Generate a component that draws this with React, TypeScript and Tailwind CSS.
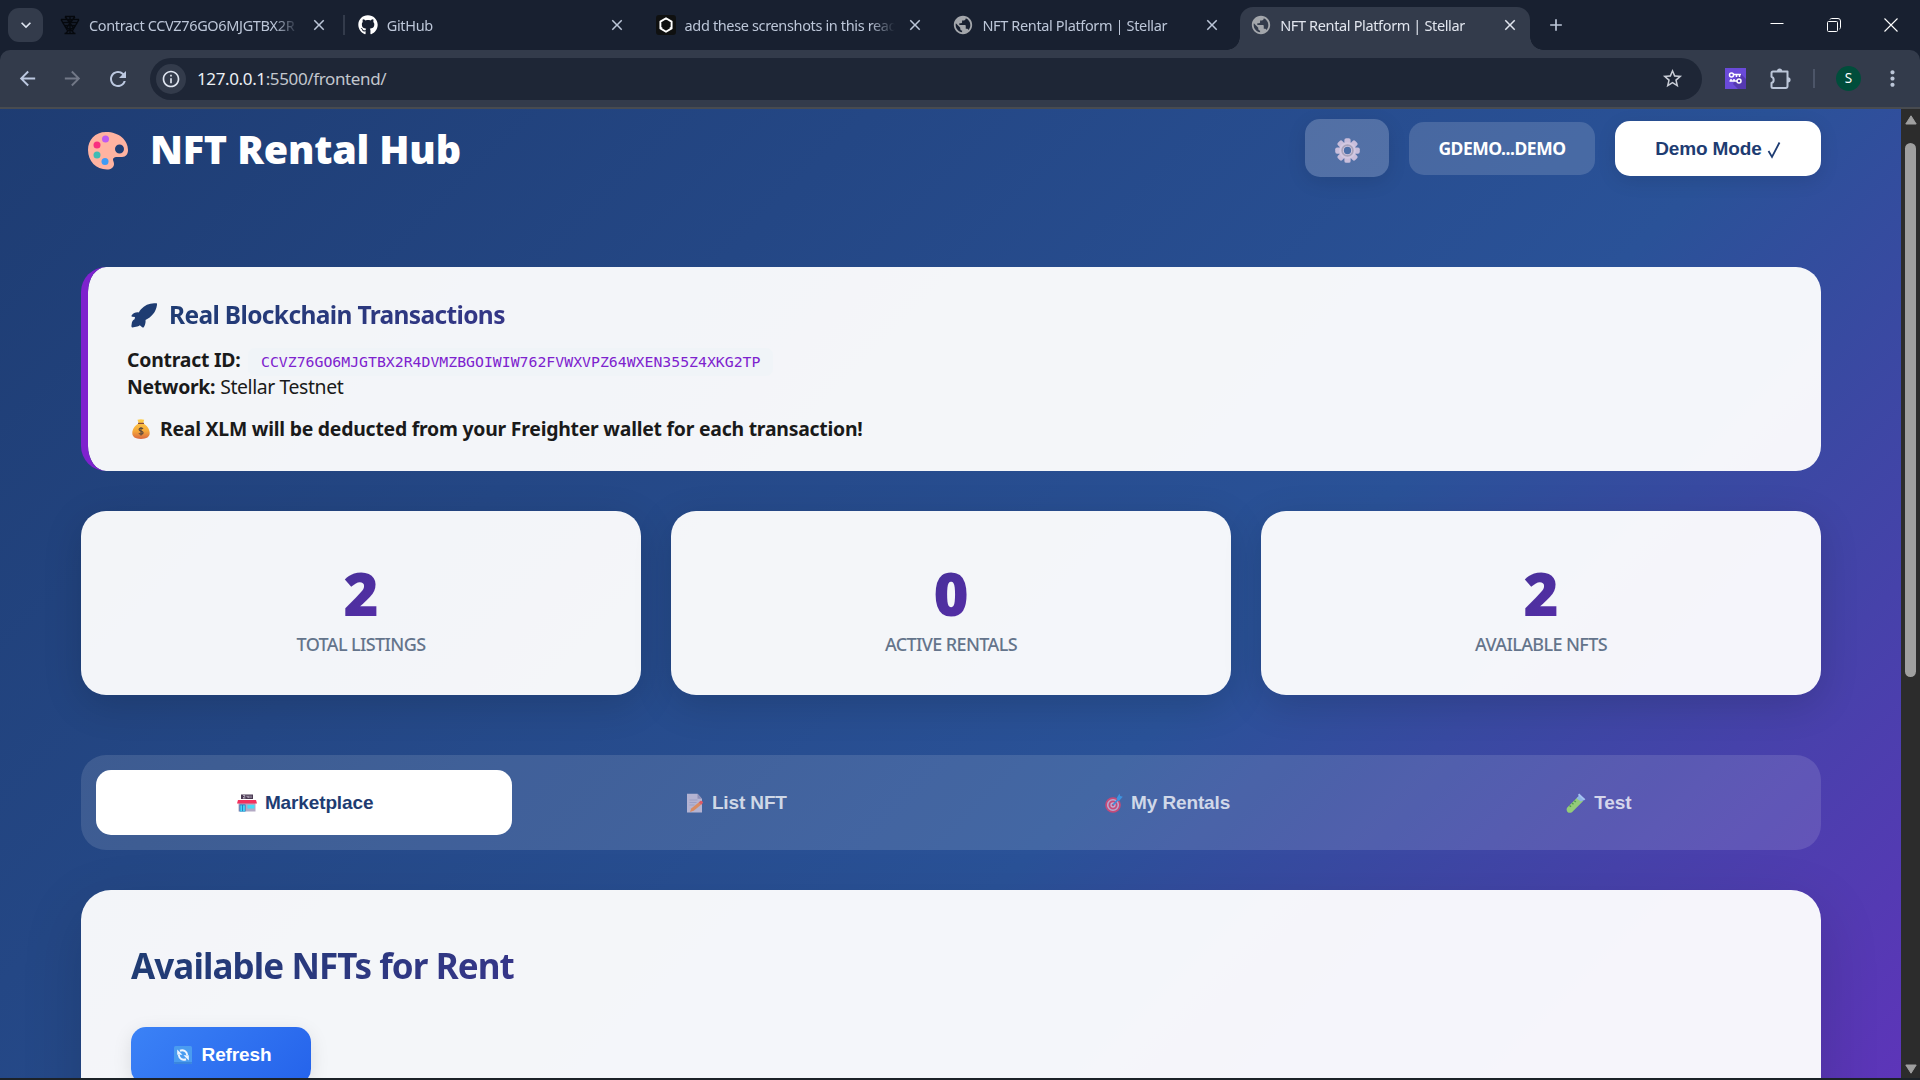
import type { ReactNode } from 'react';
import { MdArrowBack, MdArrowForward, MdClose, MdAdd, MdKeyboardArrowDown, MdRefresh, MdStarBorder, MdPublic, MdMoreVert, MdOutlineInfo } from 'react-icons/md';
import { FaGithub } from 'react-icons/fa';

const PaletteIcon = () => (
  <svg viewBox="0 0 40 38" className="h-[38px] w-[40px] shrink-0">
    <path fillRule="evenodd" fill="#ffb3a1" d="M18 0C7 0 0 8 0 18c0 11 8 19.500 19 19.500 4 0 7-2 7-5.500 0-2-1-3-1-4.500 0-2 2-2.500 5-2.500h4c4 0 6-3 6-7C40 8 31 0 18 0Zm13.500 12.500a4.500 4.500 0 1 1 0 9 4.500 4.500 0 0 1 0-9Z" />
    <circle cx="17.500" cy="7" r="3.500" fill="#bf5af2" />
    <circle cx="9" cy="13" r="3.500" fill="#f92f80" />
    <circle cx="9" cy="23" r="3.500" fill="#3fbcb4" />
    <circle cx="17" cy="29.500" r="3.500" fill="#3f9bf5" />
  </svg>
);

const GearIcon = () => (
  <svg viewBox="0 0 24 24" className="h-[25px] w-[25px]">
    <g fill="#c9bedb">
      {[0, 45, 90, 135].map((a) => (
        <rect key={a} x="9" y="0.200" width="6" height="23.600" rx="1.800" transform={`rotate(${a} 12 12)`} />
      ))}
    </g>
    <circle cx="12" cy="12" r="8" fill="#d3c8e1" />
    <circle cx="12" cy="12" r="5.200" fill="none" stroke="#a9a3bb" strokeWidth="1.600" />
    <circle cx="12" cy="12" r="3.500" fill="#4d6fa8" />
  </svg>
);

const RocketIcon = () => (
  <svg viewBox="0 0 26 25" className="h-[25px] w-[26px] shrink-0" fill="#1e3c72">
    <path d="M25.600.300c-6-.800-11.600 1.300-15.600 6-.900 1-1.600 2-2.200 3.100-2.900-.400-5.600.700-7.200 3.100-.400.700 0 1.200.700 1.200l2.700.300-.400 2.200c-1.300.600-2.300 1.700-2.700 3.300L.500 22.300c-.200 1 0 2 .8 2.200l5-.9c1.200-.2 2-.7 2.500-1.300l2.400 1.900c.7.500 1.200.6 1.700-.1 1.300-2 1.900-4.500 1.600-7 6-3 10.500-8 11.400-14.500.100-1.200.300-2.200-.3-2.300Z" />
  </svg>
);

const MoneyBagIcon = () => (
  <svg viewBox="0 0 18 20" className="h-[20px] w-[18px] shrink-0">
    <defs>
      <linearGradient id="bag" x1="0" y1="0" x2="0" y2="1">
        <stop offset="0" stopColor="#ffcf4b" />
        <stop offset="0.600" stopColor="#f5a839" />
        <stop offset="1" stopColor="#d9683f" />
      </linearGradient>
    </defs>
    <path fill="url(#bag)" d="M5.500.800 9 .200l3.200.600-1 3.400C15 6.500 17.700 10 17.700 14c0 4-3 5.900-8.700 5.900S.300 18 .300 14C.300 10 3 6.500 6.700 4.200Z" />
    <path d="M6 4.400h6" stroke="#8a4a3a" strokeWidth="1.200" />
    <path d="M11 9.800c-.6-.9-3.900-1-3.900.8 0 1.900 4 1.100 4 3.100 0 1.800-3.500 1.800-4.200.6M9 8v8.600" fill="none" stroke="#5f4a3c" strokeWidth="1.200" />
  </svg>
);

const StoreIcon = () => (
  <svg viewBox="0 0 20 18" className="h-[18px] w-[20px] shrink-0">
    <rect x="4" y="0.500" width="12" height="4.500" fill="#4a3a52" />
    <path d="M6 1.500h2v1L6 4h2.500M10 1.500v1.500h2M12 1.500V4M14 1.500V4" stroke="#d9cfe0" strokeWidth="0.700" fill="none" />
    <rect x="1.500" y="8" width="17" height="9.500" fill="#b3a9c4" />
    <path d="M1 6h18l1 3.500H0Z" fill="#f4305c" />
    <rect x="2.500" y="10.500" width="6" height="7" fill="#1d6fb8" />
    <path d="M3.300 11.200h1.900v6.300H3.300ZM6 11.200h1.900v6.300H6Z" fill="#43d3f5" />
    <rect x="10.500" y="11" width="7" height="3.500" fill="#43dcf7" />
  </svg>
);

const MemoIcon = () => (
  <svg viewBox="0 0 18 20" className="h-[20px] w-[18px] shrink-0">
    <path d="M1 .800h10.500l4.500 5V19.500H1Z" fill="#b4b3d2" />
    <path d="M11.500.800v5H16Z" fill="#8f90b8" />
    <path d="M3.500 7h8M3.500 9.500h7M3.500 12h5" stroke="#9a9cc2" strokeWidth="0.900" />
    <path d="m4 19 1.200-3.500 7.800-6.300 2.300 2.400-7.600 6.200Z" fill="#d98b62" />
    <path d="m12.800 9.300 1.900-1.500c.8-.6 2.800 1.300 2.200 2.200l-1.700 1.700Z" fill="#dd5a66" />
  </svg>
);

const TargetIcon = () => (
  <svg viewBox="0 0 18 20" className="h-[20px] w-[18px] shrink-0">
    <circle cx="8" cy="12" r="7.800" fill="#c54a79" />
    <circle cx="8" cy="12" r="5.300" fill="none" stroke="#b9a8d0" strokeWidth="1.600" />
    <circle cx="8" cy="12" r="2" fill="none" stroke="#c4b0d4" strokeWidth="1.300" />
    <path d="m8 12 5-5.500" stroke="#3c8bd9" strokeWidth="1.800" />
    <path d="M11.500 5.500 14.500.600l.7 2.500 2.600.700-4 4.500Z" fill="#3e93e0" />
  </svg>
);

const TubeIcon = () => (
  <svg viewBox="0 0 20 20" className="h-[20px] w-[20px] shrink-0">
    <path d="m1.500 14.200 11-11 4.700 4.700-11 11c-1.300 1.200-3.500 1.200-4.700 0-1.200-1.200-1.200-3.400 0-4.700Z" fill="#93cc78" />
    <path d="m10.500 5.200 3-3 4.700 4.700-3.500 1.500Z" fill="#8fb4e8" />
    <path d="m13.200.600 6.200 5.700-1.500 1.200-6-5.500Z" fill="#a5c3f2" />
    <path d="m3.500 12.500 1.500 1.300M6 10l1.500 1.300M8.300 7.700l1.500 1.300" stroke="#4f9a50" strokeWidth="1.400" />
  </svg>
);

const RefreshIcon = () => (
  <svg viewBox="0 0 18 18" className="h-[18px] w-[18px] shrink-0">
    <rect width="18" height="18" rx="1.500" fill="#4a9cf0" />
    <path d="M0 16h18v.500a1.500 1.500 0 0 1-1.500 1.500h-15A1.500 1.500 0 0 1 0 16.500Z" fill="#3b86dd" />
    <path d="M6 4.800c3-1.200 6.800.2 7.200 4.200M12 13.200c-3 1.200-6.800-.2-7.200-4.200" fill="none" stroke="#eff5ff" strokeWidth="2" />
    <path d="M3.200 3.500v5.300h5.300ZM14.800 14.500V9.200H9.500Z" fill="#eff5ff" />
  </svg>
);

const StellarFavicon = () => (
  <svg viewBox="0 0 20 20" className="h-5 w-5" fill="none" stroke="#05080d" strokeWidth="1.400">
    <path d="M5 1.500h10M1 4.500h18M2 7.500h16M4 10.500h12M6 13.500h8M4.500 18.500h11M10 1v17M5 1.500 14 13.500M15 1.500 6 13.500M1 4.500l7 12M19 4.500l-7 12M6 18l4-4 4 4" />
  </svg>
);

const ChatFavicon = () => (
  <svg viewBox="0 0 20 20" className="h-5 w-5">
    <rect width="20" height="20" rx="3" fill="#0f1010" />
    <path d="m10 3.300 5.600 3.300v6.800L10 16.700l-5.600-3.300V6.600Z" fill="none" stroke="#fff" strokeWidth="1.900" strokeLinejoin="round" />
    <path d="M10 3v2M4.400 13.500l1.800-1M15.600 13.500l-1.800-1" stroke="#fff" strokeWidth="1.200" />
  </svg>
);

const GlobeFavicon = () => <MdPublic className="h-[22px] w-[22px] text-[#a3a6ab]" />;

const browserTabs: { icon: ReactNode; title: string; active?: boolean }[] = [
  { icon: <StellarFavicon />, title: 'Contract CCVZ76GO6MJGTBX2R' },
  { icon: <FaGithub className="h-5 w-5 text-white" />, title: 'GitHub' },
  { icon: <ChatFavicon />, title: 'add these screnshots in this read' },
  { icon: <GlobeFavicon />, title: 'NFT Rental Platform | Stellar' },
  { icon: <GlobeFavicon />, title: 'NFT Rental Platform | Stellar', active: true },
];

function BrowserTab({ icon, title, active }: { icon: ReactNode; title: string; active?: boolean }) {
  return (
    <div className={`relative flex h-[43px] w-[290px] shrink-0 items-center pb-[7px] pl-[10px] pr-[11px] ${active ? 'rounded-t-[13px] bg-[#333b4b] text-[#e1e5ee]' : 'text-[#bcc6d8]'}`}>
      {active && (
        <>
          <span className="absolute -left-[13px] bottom-0 h-[13px] w-[13px] bg-[radial-gradient(circle_at_0_0,transparent_12.5px,#333b4b_13px)]" />
          <span className="absolute -right-[13px] bottom-0 h-[13px] w-[13px] bg-[radial-gradient(circle_at_100%_0,transparent_12.5px,#333b4b_13px)]" />
        </>
      )}
      <span className="flex w-[22px] shrink-0 items-center justify-center">{icon}</span>
      <span className="ml-[8px] w-[210px] overflow-hidden whitespace-nowrap pt-px text-[14.500px] tracking-[-0.360px] [mask-image:linear-gradient(90deg,#000_185px,transparent_210px)]">{title}</span>
      <MdClose className="ml-auto h-[18px] w-[18px] shrink-0" />
    </div>
  );
}

function Browser() {
  return (
    <>
      <div className="flex h-[50px] shrink-0 items-end bg-[#182030]">
        <button className="mb-[8px] ml-[8px] flex h-[34px] w-[35px] shrink-0 items-center justify-center rounded-[11px] bg-[#333b4b]">
          <MdKeyboardArrowDown className="h-[20px] w-[20px] text-[#dfe5f0]" />
        </button>
        <div className="ml-[6px] flex gap-[7.800px]">
          {browserTabs.map((t, i) => (
            <div key={i} className="flex">
              {i === 1 && <span className="-ml-[4px] mr-[2px] mt-[8px] h-[20px] w-[2px] bg-[#333b4b]" />}
              <BrowserTab {...t} />
            </div>
          ))}
        </div>
        <MdAdd className="mb-[15px] ml-[16px] h-[20px] w-[20px] text-[#bcc6d8]" />
        <div className="mb-[18px] ml-auto mr-[22px] flex items-center gap-[43px] text-white">
          <svg viewBox="0 0 14 14" className="h-[14px] w-[14px]"><path d="M0.500 5.500h13" stroke="currentColor" /></svg>
          <svg viewBox="0 0 14 14" className="h-[14px] w-[14px]" fill="none" stroke="currentColor"><rect x="0.500" y="3.500" width="10" height="10" rx="1" /><path d="M3 1.500C3.300.800 3.800.500 4.500.500H11a2.500 2.500 0 0 1 2.500 2.500v6.500c0 .7-.3 1.200-1 1.500" /></svg>
          <svg viewBox="0 0 14 14" className="h-[14px] w-[14px]"><path d="m.500.500 13 13m0-13-13 13" stroke="currentColor" strokeWidth="1.100" /></svg>
        </div>
      </div>
      <div className="h-[59px] shrink-0 bg-[#182030]">
        <div className="flex h-full items-center rounded-t-[10px] border-b-2 border-[#484b50] bg-[#333b4b] pl-[16px]">
          <MdArrowBack className="h-[23px] w-[23px] text-[#bcc8e0]" />
          <MdArrowForward className="ml-[22px] h-[23px] w-[23px] text-[#727887]" />
          <MdRefresh className="ml-[21.500px] h-[24px] w-[24px] text-[#bcc8e0]" />
          <div className="ml-[20.500px] flex h-[42px] w-[1552px] items-center rounded-full bg-[#1e2636] pl-[6px] pr-[18px]">
            <span className="flex h-[30px] w-[30px] items-center justify-center rounded-full bg-[#333b4b]">
              <MdOutlineInfo className="h-[20px] w-[20px] text-[#dfe5f0]" />
            </span>
            <span className="ml-[11px] pt-px text-[17px] tracking-[-0.370px] text-[#c3c7ce]"><span className="text-[#eceff4]">127.0.0.1</span>:5500/frontend/</span>
            <MdStarBorder className="ml-auto h-[23px] w-[23px] text-[#c9cdd6]" />
          </div>
          <svg viewBox="0 0 21 21" className="ml-[23px] h-[21px] w-[21px]">
            <rect width="21" height="21" fill="#6a4ad9" />
            <path d="m8 16 7-11 6 6v10h-8Z" fill="#5539b0" />
            <g fill="none" stroke="#fff" strokeWidth="1.500"><circle cx="6.500" cy="7" r="2" /><path d="M8.500 6.500H16M11.500 6.500v2.500M14.500 6.500v2.500M12 13H4.500M6 13v-2M9 13v-2" /><circle cx="14" cy="13" r="2" /></g>
          </svg>
          <svg viewBox="0 0 22 22" className="ml-[24px] h-[22px] w-[22px] text-[#bcc6d8]">
            <path d="M3 3.500h14.500v14.800a1.700 1.700 0 0 1-1.700 1.700H3A1.500 1.500 0 0 1 1.500 18.500V15a3.300 3.300 0 0 0 0-6.200V5A1.500 1.500 0 0 1 3 3.500Z" fill="none" stroke="currentColor" strokeWidth="2" strokeLinejoin="round" />
            <path d="M7 3a2.600 2.600 0 0 1 5.200 0ZM18 9.200a2.600 2.600 0 0 1 0 5.200Z" fill="currentColor" />
          </svg>
          <span className="ml-[21px] h-[19px] w-[2px] bg-[#4c5568]" />
          <span className="ml-[21px] flex h-[25px] w-[25px] items-center justify-center rounded-full bg-[#004d3b] text-[13.500px] text-white">S</span>
          <MdMoreVert className="ml-[19px] h-[25px] w-[25px] text-[#bcc6d8]" />
        </div>
      </div>
    </>
  );
}

const stats = [
  { value: '2', label: 'TOTAL LISTINGS' },
  { value: '0', label: 'ACTIVE RENTALS' },
  { value: '2', label: 'AVAILABLE NFTS' },
];

const sections = [
  { icon: <StoreIcon />, label: 'Marketplace' },
  { icon: <MemoIcon />, label: 'List NFT' },
  { icon: <TargetIcon />, label: 'My Rentals' },
  { icon: <TubeIcon />, label: 'Test' },
];

export default function App() {
  return (
    <div className="flex h-[1080px] w-[1920px] flex-col overflow-hidden bg-[#1c2228] font-['Noto_Sans',sans-serif]">
      <Browser />
      <div className="flex h-[969px] shrink-0">
        <main className="flex w-[1901px] flex-col overflow-hidden bg-[linear-gradient(135deg,#1e3c72_0%,#2a5298_50%,#7e22ce_100%)] bg-[length:1901px_1690px] bg-[position:0_-20px] bg-no-repeat px-[80px] pl-[81px] pt-[10px]">
          <header className="flex h-[58px] shrink-0 items-center">
            <span className="ml-[7px] mt-[6px]"><PaletteIcon /></span>
            <h1 className="ml-[22px] whitespace-nowrap pt-[3px] text-[39.500px] font-black leading-none tracking-[-0.180px] text-white">NFT Rental Hub</h1>
            <div className="ml-auto flex items-center gap-[20px]">
              <button className="flex h-[58px] w-[84px] items-center justify-center rounded-[15px] bg-white/20 pt-[4px] shadow-[0_5px_19px_rgba(0,0,0,0.1)]"><GearIcon /></button>
              <span className="flex h-[53px] w-[186px] items-center justify-center rounded-[15px] bg-white/15 pt-px text-[17.500px] font-bold tracking-[-0.450px] text-white">GDEMO...DEMO</span>
              <button className="flex h-[55px] w-[206px] items-center justify-center whitespace-pre rounded-[15px] bg-white pt-[3px] font-['Liberation_Sans',sans-serif] text-[19px] font-bold tracking-[-0.130px] text-[#1e3c72] shadow-[0_5px_19px_rgba(0,0,0,0.1)]">Demo Mode <svg viewBox="0 0 14 18" className="h-[18px] w-[14px]" fill="none" stroke="currentColor" strokeWidth="1.800"><path d="m1.500 10 3.500 6L12.500 1.500" /></svg></button>
            </div>
          </header>

          <section className="mt-[90px] flex h-[204px] shrink-0 flex-col rounded-[25px] border-l-[7px] border-[#7e22ce] bg-white/95 bg-clip-padding pl-[39px] text-[19.400px] text-[#1a1a1a]">
            <div className="mt-[32px] flex h-[32px] items-center pl-[4px]">
              <RocketIcon />
              <h3 className="ml-[12px] w-[1500px] bg-[linear-gradient(135deg,#1e3c72,#7e22ce)] bg-clip-text text-[24.500px] font-bold leading-[32px] tracking-[-0.640px] text-transparent">Real Blockchain Transactions</h3>
            </div>
            <div className="mt-[15px] flex h-[27px] items-baseline whitespace-nowrap leading-[27px]">
              <strong className="w-[121px] tracking-[-0.220px]">Contract ID:</strong>
              <code className="rounded-[7px] bg-[#f0f4f8] px-[13px] py-[6px] font-['DejaVu_Sans_Mono',monospace] text-[14.820px] leading-[16px] text-[#7e22ce]">CCVZ76GO6MJGTBX2R4DVMZBGOIWIW762FVWXVPZ64WXEN355Z4XKG2TP</code>
            </div>
            <div className="h-[27px] whitespace-nowrap leading-[27px]">
              <strong className="tracking-[-0.300px]">Network:</strong><span className="ml-[5px] tracking-[-0.400px]">Stellar Testnet</span>
            </div>
            <div className="mt-[15px] flex h-[27px] items-center pl-[5px]">
              <MoneyBagIcon />
              <strong className="ml-[10px] whitespace-nowrap leading-[27px] tracking-[-0.230px]">Real XLM will be deducted from your Freighter wallet for each transaction!</strong>
            </div>
          </section>

          <section className="mt-[39.500px] grid h-[184px] shrink-0 grid-cols-3 gap-[30px]">
            {stats.map((s) => (
              <div key={s.label} className="flex flex-col items-center rounded-[25px] bg-white/95 pt-[52.500px] shadow-[0_10px_38px_rgba(0,0,0,0.15)]">
                <div className="w-full bg-[linear-gradient(135deg,#1e3c72,#7e22ce)] bg-clip-text text-center text-[60px] font-black leading-[60px] text-transparent">{s.value}</div>
                <div className="mt-[8.500px] text-[18px] font-medium leading-[25px] tracking-[-0.620px] text-[#64748b]">{s.label}</div>
              </div>
            ))}
          </section>

          <nav className="mt-[60px] grid h-[95px] shrink-0 grid-cols-4 gap-[15px] rounded-[25px] bg-white/12 p-[15px]">
            {sections.map((s, i) => (
              <button key={s.label} className={`flex items-center justify-center gap-[8px] rounded-[15px] pl-[2px] pt-[2px] font-['Liberation_Sans',sans-serif] text-[19px] font-bold tracking-[-0.130px] ${i === 0 ? 'bg-white text-[#1e3c72]' : 'text-white/75'}`}>
                {s.icon}
                <span>{s.label}</span>
              </button>
            ))}
          </nav>

          <section className="mt-[40px] flex h-[400px] shrink-0 flex-col rounded-[30px] bg-white/95 px-[50px] pt-[51px] shadow-[0_20px_60px_rgba(0,0,0,0.15)]">
            <h2 className="bg-[linear-gradient(135deg,#1e3c72,#7e22ce)] bg-clip-text text-[35px] font-bold leading-[49px] tracking-[-0.920px] text-transparent">Available NFTs for Rent</h2>
            <button className="mt-[37px] flex h-[57px] w-[180px] items-center justify-center gap-[10px] rounded-[15px] bg-[linear-gradient(135deg,#3b82f6,#2563eb)] pl-[3px] font-['Liberation_Sans',sans-serif] text-[19px] font-bold tracking-[-0.130px] text-white shadow-[0_5px_19px_rgba(0,0,0,0.1)]">
              <RefreshIcon />
              <span>Refresh</span>
            </button>
          </section>
        </main>
        <div className="flex w-[19px] flex-col items-center bg-[#2c2c2c] pt-[6px]">
          <svg viewBox="0 0 12 10" className="h-[10px] w-[12px] shrink-0"><path d="M6 .8 11.200 9H.800Z" fill="#9f9f9f" stroke="#9f9f9f" strokeLinejoin="round" /></svg>
          <div className="mt-[18px] h-[534px] w-[11px] shrink-0 rounded-full bg-[#9f9f9f]" />
          <svg viewBox="0 0 12 10" className="mb-[4px] mt-auto h-[10px] w-[12px] shrink-0"><path d="M6 9.200 11.200 1H.800Z" fill="#9f9f9f" stroke="#9f9f9f" strokeLinejoin="round" /></svg>
        </div>
      </div>
    </div>
  );
}
